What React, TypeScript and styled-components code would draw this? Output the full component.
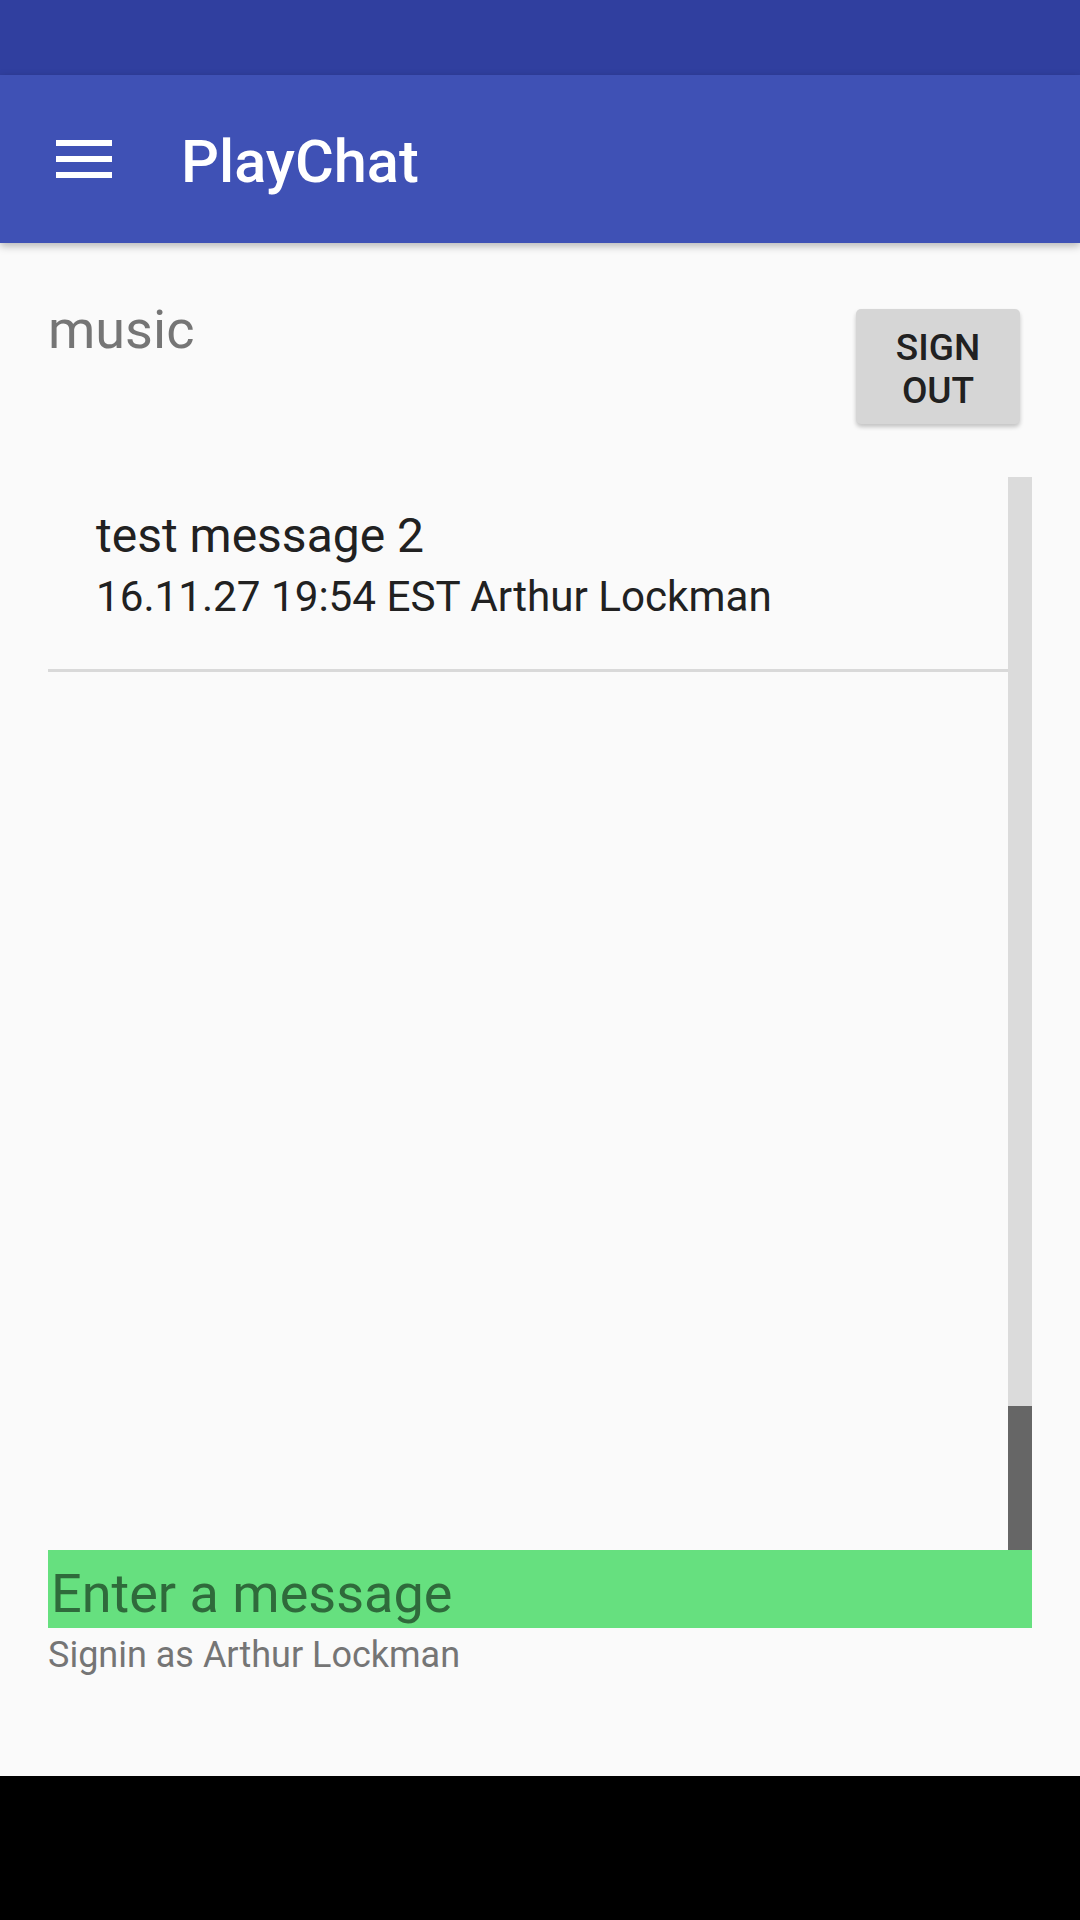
import React from 'react';
import styled, { createGlobalStyle } from 'styled-components';

const GlobalStyle = createGlobalStyle`
  html, body {
    margin: 0;
    padding: 0;
    background: #fafafa;
  }
  body {
    font-family: Roboto, 'Noto Sans', 'Liberation Sans', sans-serif;
  }
  * {
    box-sizing: border-box;
  }
`;

const Screen = styled.div`
  width: 1080px;
  height: 1920px;
  display: flex;
  flex-direction: column;
  background: #fafafa;
  overflow: hidden;
`;

const StatusBar = styled.div`
  height: 75px;
  flex-shrink: 0;
  background: #303f9f;
`;

const Toolbar = styled.header`
  position: relative;
  z-index: 1;
  height: 168px;
  flex-shrink: 0;
  display: flex;
  align-items: center;
  padding-left: 56px;
  background: #3f51b5;
  box-shadow: 0 3px 8px rgba(0, 0, 0, 0.28);
`;

const MenuButton = styled.button`
  display: flex;
  padding: 0;
  border: none;
  background: none;
  width: 56px;
  height: 38px;
  margin-right: 69px;
`;

const Title = styled.h1`
  margin: 0;
  padding-top: 6px;
  font-size: 59.5px;
  line-height: 70px;
  font-weight: 500;
  color: #ffffff;
`;

const Content = styled.main`
  flex: 1;
  display: flex;
  flex-direction: column;
  padding: 55px 48px 100px;
  min-height: 0;
`;

const HeaderRow = styled.div`
  display: flex;
  justify-content: space-between;
  align-items: flex-start;
`;

const RoomName = styled.div`
  font-size: 54px;
  line-height: 63px;
  color: #757575;
`;

const SignOutButton = styled.button`
  width: 164px;
  height: 115px;
  margin: 11px 12px 0 0;
  padding: 17px 0 12px;
  border: none;
  border-radius: 5px;
  background: #d6d6d6;
  box-shadow: 0 3px 4px rgba(0, 0, 0, 0.22);
  font-family: inherit;
  font-size: 37px;
  line-height: 43px;
  font-weight: 500;
  color: #212121;
  text-transform: uppercase;
`;

const MessageArea = styled.div`
  flex: 1;
  display: flex;
  margin-top: 53px;
  min-height: 0;
`;

const MessageList = styled.ul`
  flex: 1;
  margin: 0;
  padding: 0;
  list-style: none;
`;

const MessageItem = styled.li`
  padding: 31px 0 47px 48px;
  border-bottom: 3px solid #d9d9d9;
`;

const MessageText = styled.div`
  font-size: 48px;
  line-height: 56px;
  color: #212121;
`;

const MessageMeta = styled.div`
  margin-top: 8px;
  font-size: 42.2px;
  line-height: 50px;
  color: #212121;
`;

const ScrollTrack = styled.div`
  width: 24px;
  display: flex;
  flex-direction: column;
  justify-content: flex-end;
  background: #dbdbdb;
`;

const ScrollThumb = styled.div<{ $size: number }>`
  height: ${(p) => p.$size}px;
  background: #666666;
`;

const MessageInput = styled.input`
  display: block;
  width: 100%;
  height: 78px;
  flex-shrink: 0;
  margin: 0;
  padding: 8px 0 0 3px;
  border: none;
  outline: none;
  background: #66e07f;
  font-family: inherit;
  font-size: 54px;
  color: #212121;

  &::placeholder {
    color: #2f6a3b;
    opacity: 1;
  }
`;

const SigninHint = styled.div`
  margin-top: 6px;
  font-size: 36px;
  line-height: 42px;
  color: #757575;
`;

const NavBar = styled.div`
  height: 144px;
  flex-shrink: 0;
  background: #000000;
`;

const MenuIcon = () => (
  <svg width="56" height="38" viewBox="0 0 56 38">
    <rect x="0" y="0" width="56" height="6" fill="#ffffff" />
    <rect x="0" y="16" width="56" height="6" fill="#ffffff" />
    <rect x="0" y="32" width="56" height="6" fill="#ffffff" />
  </svg>
);

const messages = [
  { id: 1, text: 'test message 2', meta: '16.11.27 19:54 EST Arthur Lockman' },
];

export default function App() {
  return (
    <Screen>
      <GlobalStyle />
      <StatusBar />
      <Toolbar>
        <MenuButton aria-label="menu">
          <MenuIcon />
        </MenuButton>
        <Title>PlayChat</Title>
      </Toolbar>
      <Content>
        <HeaderRow>
          <RoomName>music</RoomName>
          <SignOutButton>
            Sign
            <br />
            Out
          </SignOutButton>
        </HeaderRow>
        <MessageArea>
          <MessageList>
            {messages.map((m) => (
              <MessageItem key={m.id}>
                <MessageText>{m.text}</MessageText>
                <MessageMeta>{m.meta}</MessageMeta>
              </MessageItem>
            ))}
          </MessageList>
          <ScrollTrack>
            <ScrollThumb $size={144} />
          </ScrollTrack>
        </MessageArea>
        <MessageInput placeholder="Enter a message" />
        <SigninHint>Signin as Arthur Lockman</SigninHint>
      </Content>
      <NavBar />
    </Screen>
  );
}
